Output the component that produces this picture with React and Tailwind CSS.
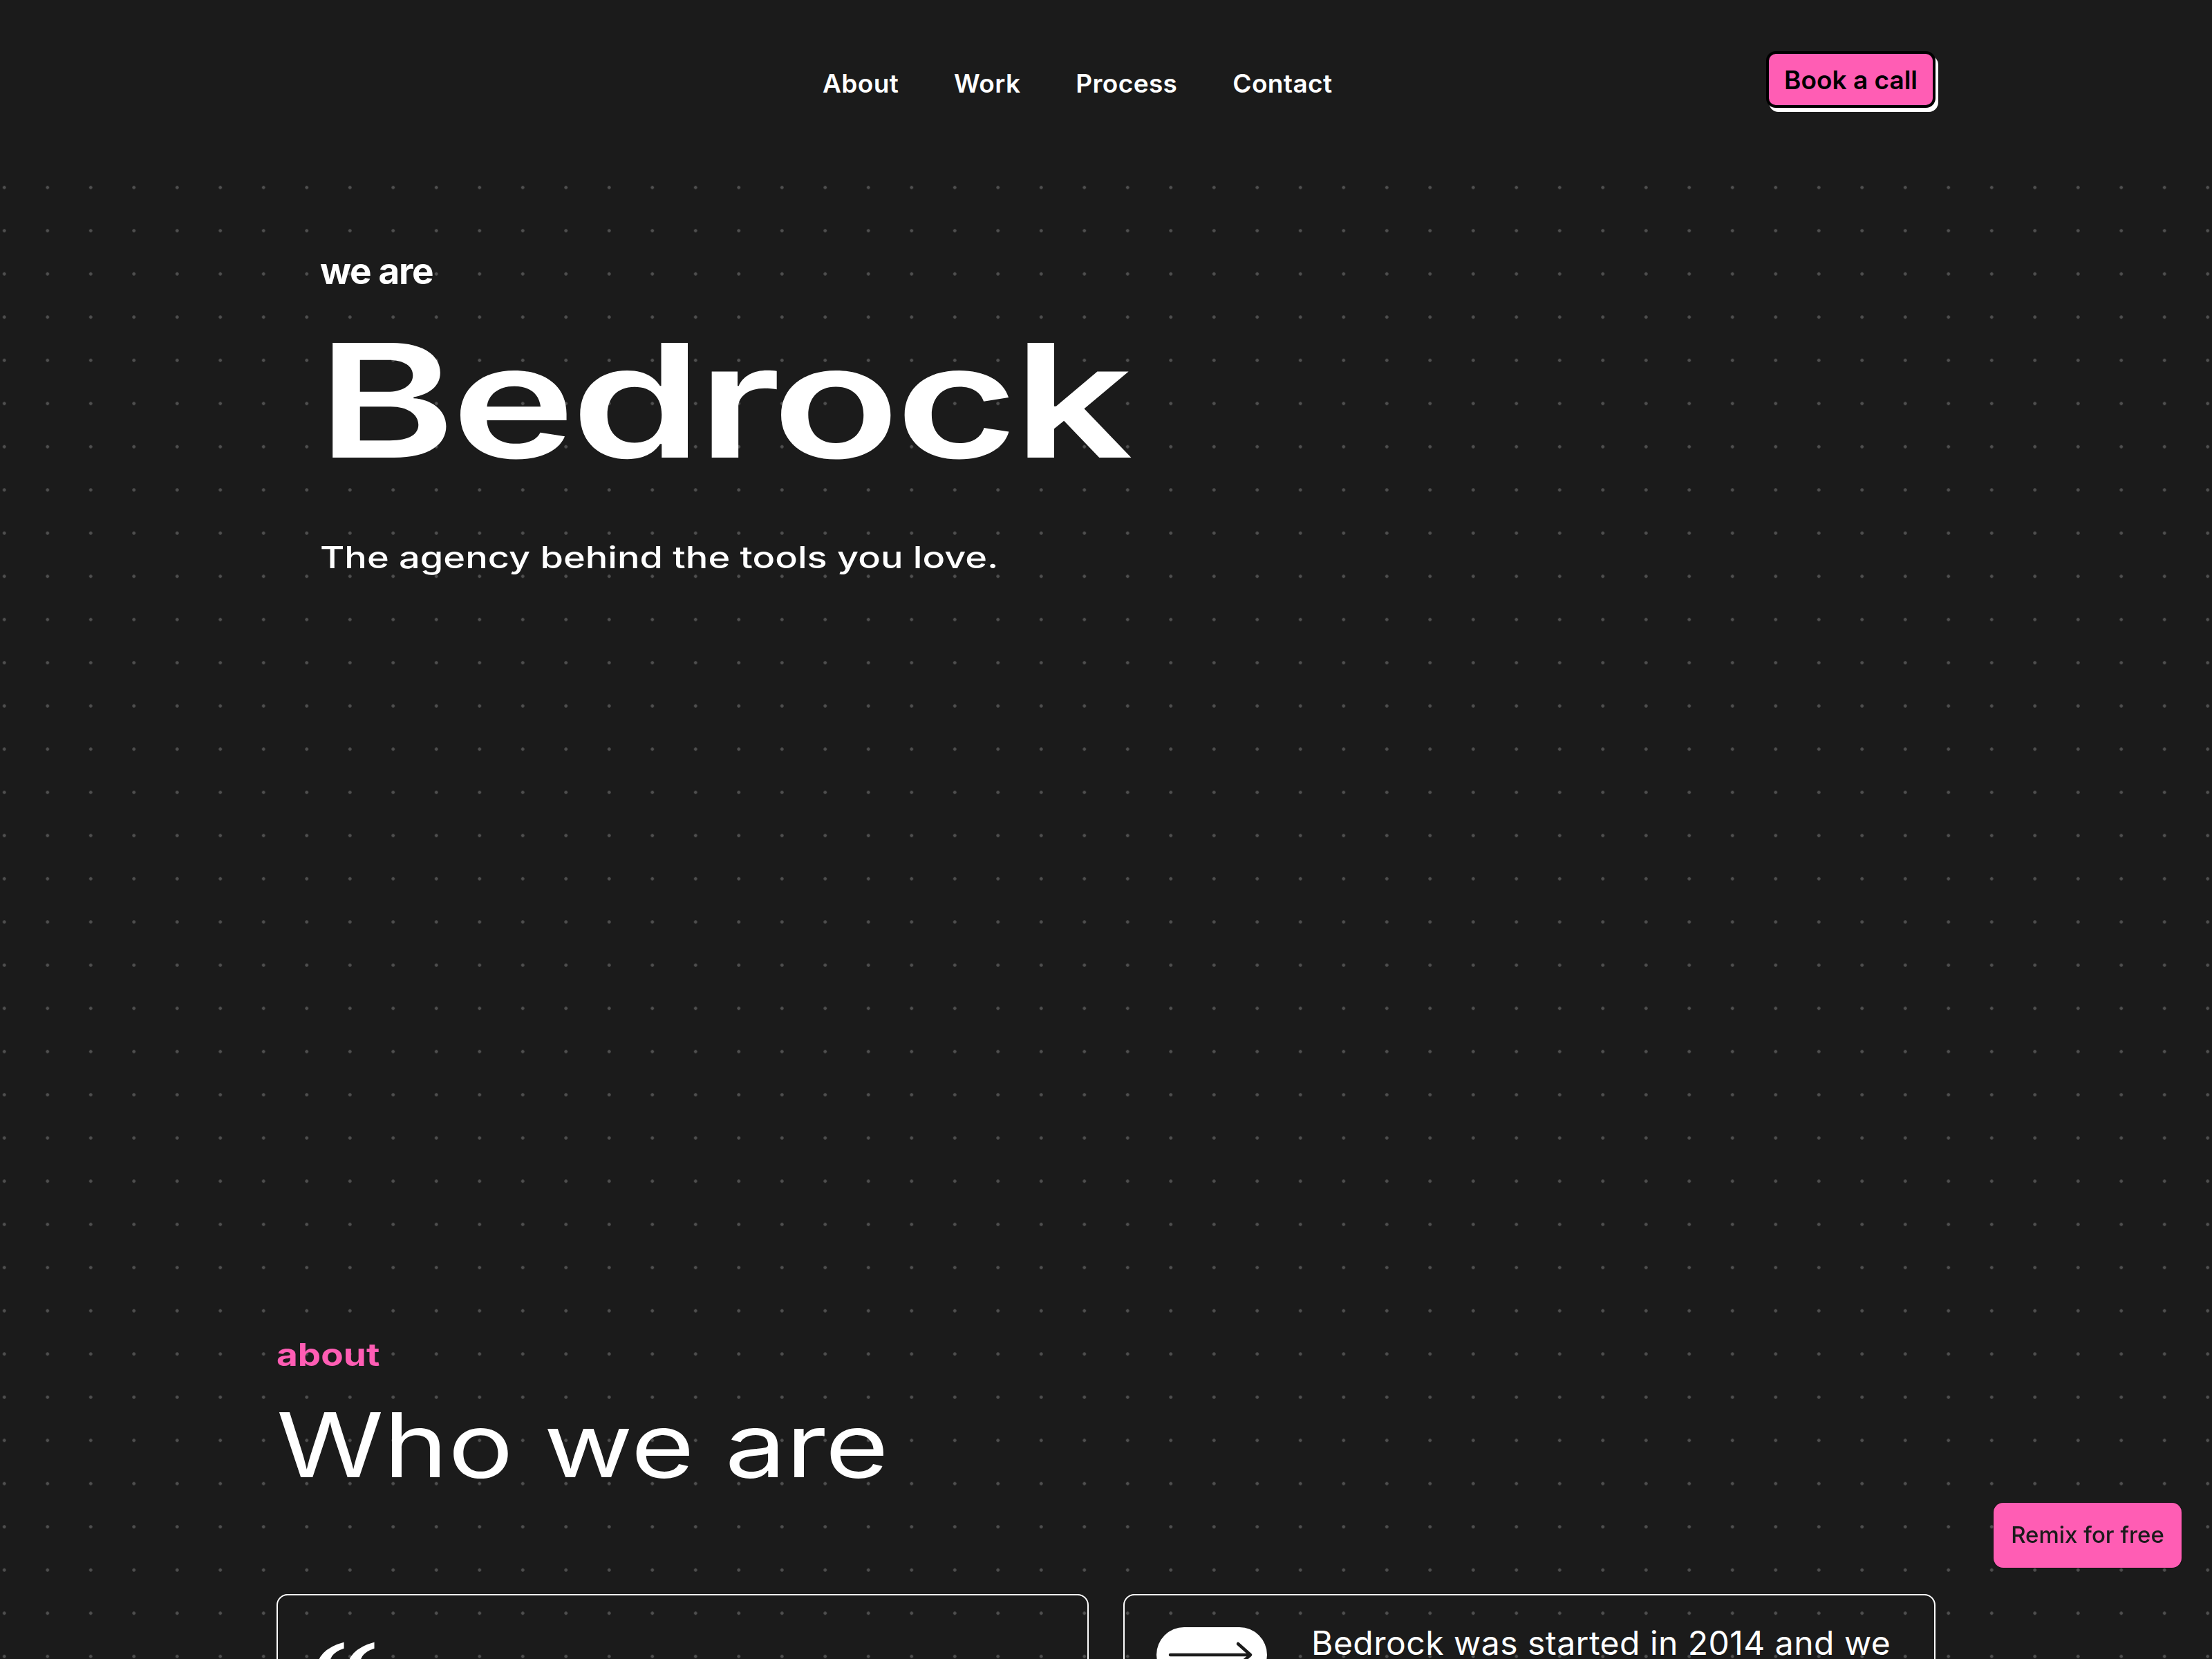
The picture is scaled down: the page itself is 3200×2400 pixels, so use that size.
import React from "react";

const navLinks = ["About", "Work", "Process", "Contact"];

const ArrowRight = () => (
  <svg width="128" height="40" viewBox="0 0 128 40" fill="none">
    <path d="M4 20H118" stroke="#1b1b1b" strokeWidth="4.5" strokeLinecap="round" />
    <path d="M102 4L120 20L102 36" stroke="#1b1b1b" strokeWidth="4.5" strokeLinecap="round" strokeLinejoin="round" />
  </svg>
);

const App = () => {
  return (
    <div className="min-h-screen overflow-x-hidden bg-[#1b1b1b] text-white font-['Inter','Noto_Sans',sans-serif]">
      {/* Nav */}
      <header className="h-[240px]">
        <div className="w-[2400px] mx-auto h-full flex items-center">
          <nav className="ml-[790px] flex items-center gap-[80px] text-[37px] font-semibold leading-none tracking-[0.01em]">
            {navLinks.map((link) => (
              <a key={link} href="#" className="text-white">
                {link}
              </a>
            ))}
          </nav>
          <button className="ml-auto mb-[10px] h-[82px] px-[22px] rounded-[14px] border-[4px] border-black bg-[#ff5db4] text-black text-[37px] font-semibold leading-none shadow-[4px_6px_0_0_#ffffff]">
            Book a call
          </button>
        </div>
      </header>

      {/* Dotted canvas */}
      <main className="bg-[radial-gradient(circle,#4f4f4f_2px,transparent_2.6px)] bg-size-[62.5px_62.5px] bg-position-[-25px_0px] pb-[400px]">
        {/* Hero */}
        <section className="w-[2400px] mx-auto h-[1500px] pt-[126px] pl-[63px]">
          <p className="text-[53px] font-bold leading-none tracking-tight">we are</p>
          <h1 className="mt-[46px] w-fit text-[228px] font-semibold leading-none tracking-[-0.02em] origin-left scale-x-[1.33] -ml-[4px]">
            Bedrock
          </h1>
          <p className="mt-[91px] w-fit text-[44px] font-medium leading-none origin-left scale-x-[1.23]">
            The agency behind the tools you love.
          </p>
        </section>

        {/* About */}
        <section className="w-[2400px] mx-auto pt-[197px]">
          <p className="w-fit text-[45px] font-bold leading-none text-[#ff5db4] origin-left scale-x-[1.18]">
            about
          </p>
          <h2 className="mt-[44px] w-fit text-[129px] font-normal leading-none origin-left scale-x-[1.22]">
            Who we are
          </h2>

          <div className="mt-[151px] grid grid-cols-2 gap-[50px]">
            <div className="border-2 border-white rounded-[16px] p-[46px]">
              <div className="mt-[32px] h-[110px] text-[200px] font-bold leading-[110px] font-['Liberation_Serif',serif]">“</div>
              <p className="mt-[20px] text-[48px] leading-[1.4] tracking-[0.01em]">
                Bedrock feels like an extension of our own team. They shipped fast, sweated the details and never lost sight of the people using the product.
              </p>
            </div>
            <div className="border-2 border-white rounded-[16px] p-[46px] flex gap-[64px]">
              <div className="shrink-0 w-[160px] h-[80px] rounded-full bg-white flex items-center justify-center">
                <ArrowRight />
              </div>
              <p className="-mt-[8px] text-[48px] leading-[1.3] tracking-[0.01em]">
                Bedrock was started in 2014 and we have spent the last decade designing and building the tools that teams rely on every day.
              </p>
            </div>
          </div>
        </section>
      </main>

      {/* Floating remix badge */}
      <a
        href="#"
        className="fixed right-[44px] bottom-[132px] w-[272px] h-[94px] rounded-[14px] bg-[#ff5db4] ring-1 ring-black/40 flex items-center justify-center text-[#1b1b1b] text-[33px] font-medium"
      >
        Remix for free
      </a>
    </div>
  );
};

export default App;
